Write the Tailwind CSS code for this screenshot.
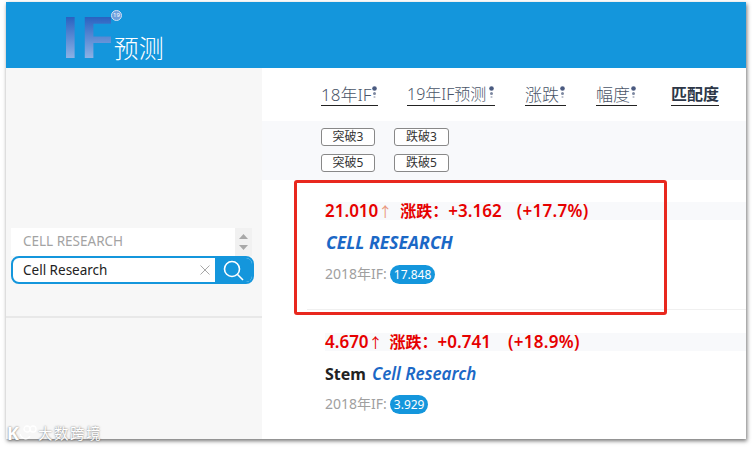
<!DOCTYPE html>
<html lang="zh">
<head>
    <meta charset="UTF-8">
    <title>IF预测</title>
    <script src="https://cdn.jsdelivr.net/npm/@tailwindcss/browser@4"></script>
</head>
<body class="bg-white w-[752px] h-[449px] overflow-hidden font-['Noto_Sans','Noto_Sans_CJK_SC',sans-serif]">
    <div class="relative ml-[6px] mt-[2px] w-[740px] h-[437px] bg-white overflow-hidden shadow-[1px_2px_4px_rgba(0,0,0,0.55)]">
        <header class="h-[66px] bg-[#1496dc] pl-[56px] flex items-start relative">
            <span class="font-['Liberation_Sans',sans-serif] font-bold text-[60px] leading-none mt-[6px] bg-gradient-to-b from-[#0f4fb8] to-[#a4c4ec] bg-clip-text text-transparent">I</span>
            <span class="font-['Liberation_Sans',sans-serif] font-bold text-[60px] leading-none mt-[6px] ml-[2px] w-[30px] bg-gradient-to-b from-[#0f4fb8] to-[#a4c4ec] bg-clip-text text-transparent">F</span>
            <span class="text-white text-[25px] leading-none mt-[34px] ml-[3px] font-light">预测</span>
            <span class="w-[11px] h-[11px] rounded-full bg-[#6f9fdc] border border-[#cfe0f5] text-[6px] leading-[9px] text-center text-white absolute left-[105px] top-[8px]">19</span>
        </header>
        <div class="flex h-[371px]">
            <aside class="w-[256px] bg-[#f7f7f7] shrink-0">
                <div class="h-[250px] border-b-2 border-[#e8e8e8] pl-[5px] pt-[160px]">
                    <div class="w-[241px] h-[28px] bg-white flex">
                        <div class="flex-1 pl-[12px] text-[13.5px] leading-[26px] text-[#a3a3a3]">CELL RESEARCH</div>
                        <div class="w-[17px] bg-[#f1f1f1] flex flex-col items-center justify-between py-[6px]">
                            <svg width="9" height="5" viewBox="0 0 9 5"><path d="M4.5 0L9 5H0z" fill="#a8a8a8"/></svg>
                            <svg width="9" height="5" viewBox="0 0 9 5"><path d="M0 0H9L4.5 5z" fill="#a8a8a8"/></svg>
                        </div>
                    </div>
                    <div class="w-[243px] h-[28px] border-2 border-[#1496dc] rounded-[8px] bg-white flex items-center overflow-hidden">
                        <div class="flex-1 pl-[10px] pt-[2px] text-[13.5px] text-[#222] leading-none">Cell Research</div>
                        <svg class="mr-[5px]" width="10" height="10" viewBox="0 0 10 10"><path d="M0.5 0.5L9.5 9.5M9.5 0.5L0.5 9.5" stroke="#a8a8a8" stroke-width="1"/></svg>
                        <div class="w-[37px] h-full bg-[#1496dc] flex items-center justify-center">
                            <svg width="21" height="21" viewBox="0 0 21 21" fill="none" stroke="white" stroke-width="1.6"><circle cx="9" cy="9" r="7.5"/><path d="M14.5 14.5L20 20"/></svg>
                        </div>
                    </div>
                </div>
            </aside>
            <main class="flex-1">
                <div class="h-[53px] pl-[59px] flex items-start pt-[15px] text-[17px] font-light text-[#4a5568] leading-[23px] whitespace-nowrap">
                    <div class="border-b border-[#222] h-[23px] flex w-[57px]">18年IF<svg class="ml-auto mt-[3px] mr-[1px]" width="5" height="13" viewBox="0 0 5 13"><circle cx="2.5" cy="2.5" r="2.3" fill="#4a5a80"/><circle cx="2.5" cy="7.5" r="1.5" fill="#7d88a0"/><circle cx="2.5" cy="11" r="1.1" fill="#b5bbc9"/></svg></div>
                    <div class="border-b border-[#222] h-[23px] flex w-[88px] ml-[29px] text-[16px]">19年IF预测<svg class="ml-auto mt-[3px] mr-[1px]" width="5" height="13" viewBox="0 0 5 13"><circle cx="2.5" cy="2.5" r="2.3" fill="#4a5a80"/><circle cx="2.5" cy="7.5" r="1.5" fill="#7d88a0"/><circle cx="2.5" cy="11" r="1.1" fill="#b5bbc9"/></svg></div>
                    <div class="border-b border-[#222] h-[23px] flex w-[41px] ml-[30px]">涨跌<svg class="ml-auto mt-[3px] mr-[1px]" width="5" height="13" viewBox="0 0 5 13"><circle cx="2.5" cy="2.5" r="2.3" fill="#4a5a80"/><circle cx="2.5" cy="7.5" r="1.5" fill="#7d88a0"/><circle cx="2.5" cy="11" r="1.1" fill="#b5bbc9"/></svg></div>
                    <div class="border-b border-[#222] h-[23px] flex w-[41px] ml-[30px]">幅度<svg class="ml-auto mt-[3px] mr-[1px]" width="5" height="13" viewBox="0 0 5 13"><circle cx="2.5" cy="2.5" r="2.3" fill="#4a5a80"/><circle cx="2.5" cy="7.5" r="1.5" fill="#7d88a0"/><circle cx="2.5" cy="11" r="1.1" fill="#b5bbc9"/></svg></div>
                    <div class="border-b border-[#222] h-[23px] text-[16px] font-bold text-[#2d3748] ml-[34px]">匹配度</div>
                </div>
                <div class="h-[59px] bg-[#f8f9fb] pl-[59px] pt-[7px] flex flex-col gap-[8px]">
                    <div class="flex gap-[19px]">
                        <div class="w-[54px] h-[18px] border border-[#888] rounded-[3px] bg-white text-[12px] leading-[15px] text-center text-[#333]">突破3</div>
                        <div class="w-[55px] h-[18px] border border-[#888] rounded-[3px] bg-white text-[12px] leading-[15px] text-center text-[#333]">跌破3</div>
                    </div>
                    <div class="flex gap-[19px]">
                        <div class="w-[54px] h-[18px] border border-[#888] rounded-[3px] bg-white text-[12px] leading-[15px] text-center text-[#333]">突破5</div>
                        <div class="w-[55px] h-[18px] border border-[#888] rounded-[3px] bg-white text-[12px] leading-[15px] text-center text-[#333]">跌破5</div>
                    </div>
                </div>
                <section class="h-[130px] ml-[45px] pt-[22px] border-b border-[#f0f0f0]">
                    <div class="ml-[18px] h-[18px] bg-[#f8f9fb] flex items-center text-[17px] font-semibold text-[#e60000] whitespace-nowrap">
                        <span>21.010</span><span class="w-[10px] text-[14px] text-center font-normal text-[#e9967a]">↑</span>
                        <span class="ml-[12px] text-[16px]">涨跌：</span><span>+3.162</span>
                        <span class="ml-[15px] tracking-[0.3px]">(+17.7%)</span>
                    </div>
                    <div class="pl-[19px] mt-[10px] text-[17.5px] leading-[24px] font-bold italic text-[#1b68c6]">CELL RESEARCH</div>
                    <div class="pl-[18px] mt-[10px] flex items-center text-[14px] text-[#a0a0a0] leading-[20px]">2018年IF:<span class="ml-[3px] px-[4px] rounded-full bg-[#1496dc] text-white text-[12px] leading-[19px]">17.848</span></div>
                </section>
                <section class="pt-[23px] ml-[63px]">
                    <div class="h-[18px] bg-[#f8f9fb] flex items-center text-[17px] font-semibold text-[#e60000] whitespace-nowrap">
                        <span>4.670</span><span class="w-[10px] text-[14px] text-center font-normal">↑</span>
                        <span class="ml-[11px] text-[16px]">涨跌：</span><span>+0.741</span>
                        <span class="ml-[17px] tracking-[0.3px]">(+18.9%)</span>
                    </div>
                    <div class="mt-[11px] text-[16px] leading-[24px] font-bold text-[#222] flex gap-[6px]">Stem <span class="italic text-[17px] text-[#1b68c6] font-semibold">Cell Research</span></div>
                    <div class="mt-[8px] flex items-center text-[14px] text-[#a0a0a0] leading-[20px]">2018年IF:<span class="ml-[3px] px-[4px] rounded-full bg-[#1496dc] text-white text-[12px] leading-[19px]">3.929</span></div>
                </section>
            </main>
        </div>
        <div class="absolute left-[288px] top-[178px] w-[373px] h-[135px] border-[3px] border-[#e8281e] rounded-[3px]"></div>
    </div>
    <div class="absolute left-[7px] top-[424px] flex items-center text-white leading-none [text-shadow:0_0_2px_rgba(0,0,0,0.6)]">
        <span class="font-bold text-[18px] w-[13px]">K</span>
        <svg width="18" height="16" viewBox="0 0 18 16" fill="none" stroke="white" stroke-width="1.3"><circle cx="7" cy="4" r="3"/><circle cx="13" cy="4" r="3"/><path d="M0 9C2 15 8 15 10 11"/></svg>
        <span class="text-[14.5px] tracking-[1.5px]">大数跨境</span>
    </div>
</body>
</html>
